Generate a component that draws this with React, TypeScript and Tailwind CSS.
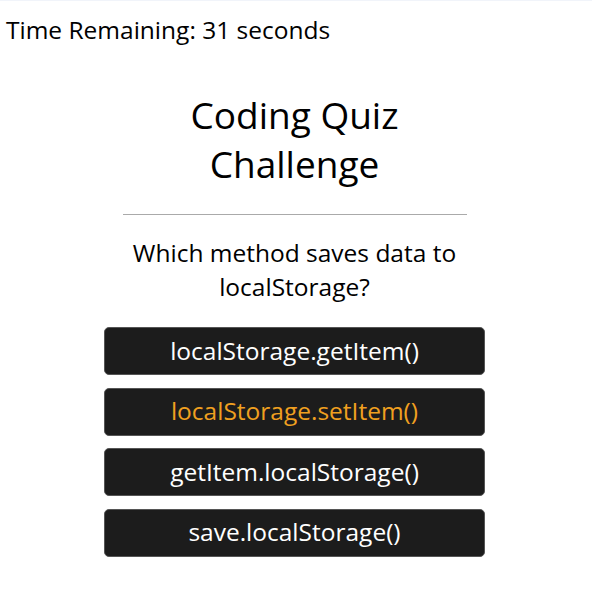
import React from 'react';

const choices = [
  'localStorage.getItem()',
  'localStorage.setItem()',
  'getItem.localStorage()',
  'save.localStorage()',
];

const App: React.FC = () => {
  return (
    <div className="min-h-[600px] bg-white text-black border-t border-[#f1f4fa]" style={{ fontFamily: '"Open Sans", sans-serif' }}>
      {/* Timer */}
      <div className="px-[6px] pt-[14px] text-[24.5px] leading-[30px]">Time Remaining: 31 seconds</div>

      <div className="flex flex-col items-center pr-[3px]">
        {/* Quiz card */}
        <div className="w-[344px] text-center mt-[45px]">
          <h1 className="text-[37px] leading-[49px]">Coding Quiz Challenge</h1>
          <hr className="mt-[26px] border-0 h-px bg-[#aaaaaa]" />
          <p className="mt-[21px] text-[24.5px] leading-[34px]">Which method saves data to localStorage?</p>
        </div>

        {/* Answers */}
        <div className="w-[381px] mt-[23px] flex flex-col gap-[12.5px]">
          {choices.map((c, i) => (
            <button
              key={c}
              className={`h-[48px] w-full rounded-[5px] border border-[#555] bg-[#1c1c1c] text-[24.5px] ${i === 1 ? 'text-[#f0a020]' : 'text-white'}`}
            >
              {c}
            </button>
          ))}
        </div>
      </div>
    </div>
  );
};

export default App;
